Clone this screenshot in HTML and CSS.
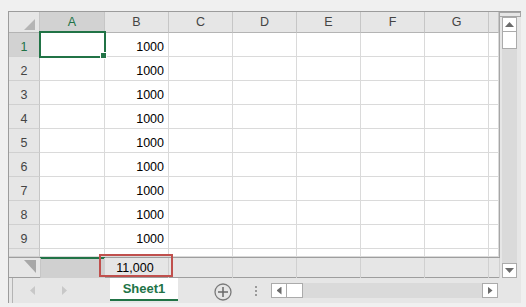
FILE: index.html
```html
<!DOCTYPE html>
<html lang="en">
<head>
    <meta charset="UTF-8">
    <title>Sheet1</title>
    <link rel="stylesheet" href="styles.css">
</head>
<body>
    <div class="window">
        <div class="top">
            <div class="sheet">
                <div class="grid">
                    <div class="row head">
                        <div class="corner"><span class="tri-corner"></span></div>
                        <div class="col sel">A</div>
                        <div class="col">B</div>
                        <div class="col">C</div>
                        <div class="col">D</div>
                        <div class="col">E</div>
                        <div class="col">F</div>
                        <div class="col">G</div>
                        <div class="col"></div>
                    </div>
                    <div class="row">
                        <div class="num sel">1</div><div class="cell"></div><div class="cell val">1000</div>
                        <div class="cell"></div><div class="cell"></div><div class="cell"></div><div class="cell"></div><div class="cell"></div><div class="cell"></div>
                    </div>
                    <div class="row">
                        <div class="num">2</div><div class="cell"></div><div class="cell val">1000</div>
                        <div class="cell"></div><div class="cell"></div><div class="cell"></div><div class="cell"></div><div class="cell"></div><div class="cell"></div>
                    </div>
                    <div class="row">
                        <div class="num">3</div><div class="cell"></div><div class="cell val">1000</div>
                        <div class="cell"></div><div class="cell"></div><div class="cell"></div><div class="cell"></div><div class="cell"></div><div class="cell"></div>
                    </div>
                    <div class="row">
                        <div class="num">4</div><div class="cell"></div><div class="cell val">1000</div>
                        <div class="cell"></div><div class="cell"></div><div class="cell"></div><div class="cell"></div><div class="cell"></div><div class="cell"></div>
                    </div>
                    <div class="row">
                        <div class="num">5</div><div class="cell"></div><div class="cell val">1000</div>
                        <div class="cell"></div><div class="cell"></div><div class="cell"></div><div class="cell"></div><div class="cell"></div><div class="cell"></div>
                    </div>
                    <div class="row">
                        <div class="num">6</div><div class="cell"></div><div class="cell val">1000</div>
                        <div class="cell"></div><div class="cell"></div><div class="cell"></div><div class="cell"></div><div class="cell"></div><div class="cell"></div>
                    </div>
                    <div class="row">
                        <div class="num">7</div><div class="cell"></div><div class="cell val">1000</div>
                        <div class="cell"></div><div class="cell"></div><div class="cell"></div><div class="cell"></div><div class="cell"></div><div class="cell"></div>
                    </div>
                    <div class="row">
                        <div class="num">8</div><div class="cell"></div><div class="cell val">1000</div>
                        <div class="cell"></div><div class="cell"></div><div class="cell"></div><div class="cell"></div><div class="cell"></div><div class="cell"></div>
                    </div>
                    <div class="row">
                        <div class="num">9</div><div class="cell"></div><div class="cell val">1000</div>
                        <div class="cell"></div><div class="cell"></div><div class="cell"></div><div class="cell"></div><div class="cell"></div><div class="cell"></div>
                    </div>
                    <div class="row part">
                        <div class="num"></div><div class="cell"></div><div class="cell"></div>
                        <div class="cell"></div><div class="cell"></div><div class="cell"></div><div class="cell"></div><div class="cell"></div><div class="cell"></div>
                    </div>
                    <div class="selection"><span class="handle"></span></div>
                </div>
                <div class="pane">
                    <div class="pane-corner"><span class="tri-pane"></span></div>
                    <div class="pane-cell pane-a"></div>
                    <div class="pane-cell total">11,000</div>
                    <div class="pane-cell"></div>
                    <div class="pane-cell"></div>
                    <div class="pane-cell"></div>
                    <div class="pane-cell"></div>
                    <div class="pane-cell"></div>
                    <div class="pane-cell"></div>
                    <div class="total-box"></div>
                </div>
            </div>
            <div class="vscroll">
                <div class="split"></div>
                <div class="sbtn"><span class="arr-up"></span></div>
                <div class="vthumb"></div>
                <div class="vtrack"></div>
                <div class="sbtn"><span class="arr-down"></span></div>
            </div>
        </div>
        <div class="tabbar">
            <span class="edge"></span>
            <span class="nav nav-left"></span>
            <span class="nav nav-right"></span>
            <div class="tab">Sheet1</div>
            <svg class="add" width="18" height="18" viewBox="0 0 18 18">
                <circle cx="9" cy="9" r="8" fill="none" stroke="#7a7a7a" stroke-width="1.3"/>
                <path d="M9 4v10M4 9h10" stroke="#6a6a6a" stroke-width="1.5"/>
            </svg>
            <span class="dots"><i></i><i></i><i></i></span>
            <div class="hscroll">
                <div class="hbtn"><span class="arr-left"></span></div>
                <div class="hthumb"></div>
                <div class="htrack"></div>
                <div class="hbtn"><span class="arr-right"></span></div>
            </div>
        </div>
    </div>
</body>
</html>
```
FILE: styles.css
```css
* {
    box-sizing: border-box;
}
body {
    margin: 0;
    background: #f0f0f0;
    font-family: "Liberation Sans", Arial, sans-serif;
    font-size: 12.5px;
    color: #000;
}
.window {
    margin: 11px 0 0 8px;
    width: 513px;
    height: 292px;
    border-top: 1px solid #9c9c9c;
    border-left: 1px solid #9c9c9c;
    background: #e6e6e6;
}
.top {
    display: flex;
}
.sheet {
    width: 491px;
}
.grid {
    position: relative;
    height: 245px;
    overflow: hidden;
    background: #fff;
    border-right: 1px solid #a6a6a6;
}
.row {
    display: grid;
    grid-template-columns: 31px 65px repeat(6, 64px) 10px;
    height: 24px;
}
.row.head {
    height: 21px;
}
.row.part {
    height: 8px;
    overflow: hidden;
}
.cell {
    border-right: 1px solid #dadada;
    border-bottom: 1px solid #dadada;
    padding: 5px 4px 0 0;
    line-height: 18px;
}
.val {
    text-align: right;
}
.num {
    background: #e6e6e6;
    border-right: 1px solid #c6c6c6;
    border-bottom: 1px solid #d0d0d0;
    text-align: center;
    color: #444;
    padding-top: 5px;
    line-height: 18px;
}
.corner, .col {
    background: #e6e6e6;
    border-right: 1px solid #c6c6c6;
    border-bottom: 1px solid #b4b4b4;
}
.col {
    text-align: center;
    color: #444;
    padding-top: 1px;
    line-height: 19px;
}
.sel {
    background: #d2d2d2;
    color: #217346;
}
.corner {
    display: flex;
    justify-content: flex-end;
    align-items: flex-end;
    padding: 0 4px 2px 0;
}
.tri-corner {
    width: 11px;
    height: 11px;
    background: #b5b5b5;
    clip-path: polygon(100% 0, 100% 100%, 0 100%);
}
.selection {
    position: absolute;
    left: 30px;
    top: 19px;
    width: 67px;
    height: 27px;
    border: 2px solid #217346;
}
.handle {
    position: absolute;
    right: -3px;
    bottom: -3px;
    width: 7px;
    height: 7px;
    background: #217346;
    border: 1px solid #fff;
}
.pane {
    position: relative;
    display: grid;
    grid-template-columns: 31px 65px repeat(6, 64px) 11px;
    height: 21px;
    border-top: 1px solid #9e9e9e;
    border-bottom: 1px solid #9e9e9e;
}
.pane-corner {
    display: flex;
    justify-content: flex-end;
    padding: 2px 4px 0 0;
}
.tri-pane {
    width: 12px;
    height: 13px;
    background: #a8a8a8;
    clip-path: polygon(0 0, 100% 0, 100% 100%);
}
.pane-cell {
    border-right: 1px solid #d0d0d0;
}
.pane-a {
    background: #d0d0d0;
    border-left: 1px solid #c6c6c6;
    box-shadow: 0 -1px 0 #217346, inset 0 1px 0 #217346;
}
.total {
    text-align: center;
    padding: 1px 3px 0 0;
    line-height: 19px;
}
.total-box {
    position: absolute;
    left: 90px;
    top: -4px;
    width: 74px;
    height: 23px;
    border: 2px solid #c0504d;
}
.vscroll {
    width: 21px;
    display: flex;
    flex-direction: column;
    padding: 0 4px 0 2px;
}
.split {
    margin: 0 -4px 0 -3px;
    height: 5px;
    border: 1px solid #a6a6a6;
    background: #e6e6e6;
}
.sbtn, .hbtn {
    display: flex;
    justify-content: center;
    align-items: center;
    width: 15px;
    height: 15px;
    background: #fff;
    border: 1px solid #ababab;
}
.vthumb {
    height: 17px;
    background: #fff;
    border: 1px solid #ababab;
    border-top: none;
}
.vtrack {
    flex: 1;
    background: #dadada;
}
.arr-up, .arr-down {
    width: 9px;
    height: 5px;
    background: #6b6b6b;
    clip-path: polygon(50% 0, 100% 100%, 0 100%);
}
.arr-down {
    clip-path: polygon(0 0, 100% 0, 50% 100%);
}
.arr-left, .arr-right {
    width: 5px;
    height: 8px;
    background: #6b6b6b;
    clip-path: polygon(100% 0, 100% 100%, 0 50%);
}
.arr-right {
    clip-path: polygon(0 0, 100% 50%, 0 100%);
}
.tabbar {
    display: flex;
    align-items: flex-start;
    height: 25px;
}
.edge {
    margin-left: 3px;
    width: 1px;
    height: 25px;
    background: #b4b4b4;
}
.nav {
    width: 5px;
    height: 9px;
    margin-top: 8px;
    background: #c8c8c8;
}
.nav-left {
    margin-left: 17px;
    clip-path: polygon(100% 0, 100% 100%, 0 50%);
}
.nav-right {
    margin-left: 27px;
    clip-path: polygon(0 0, 100% 50%, 0 100%);
}
.tab {
    margin-left: 43px;
    width: 68px;
    height: 23px;
    background: #fff;
    border-bottom: 2px solid #217346;
    color: #217346;
    font-weight: bold;
    font-size: 13px;
    text-align: center;
    padding-top: 1px;
    line-height: 20px;
}
.add {
    margin: 5px 0 0 36px;
}
.dots {
    display: flex;
    flex-direction: column;
    gap: 2px;
    margin: 8px 0 0 23px;
}
.dots i {
    display: block;
    width: 2px;
    height: 2px;
    background: #9a9a9a;
}
.hscroll {
    display: flex;
    margin: 5px 0 0 14px;
    width: 227px;
    height: 15px;
}
.hbtn {
    width: 16px;
}
.hthumb {
    width: 16px;
    background: #fff;
    border: 1px solid #ababab;
    border-left: none;
}
.htrack {
    flex: 1;
    background: #dadada;
}
```
